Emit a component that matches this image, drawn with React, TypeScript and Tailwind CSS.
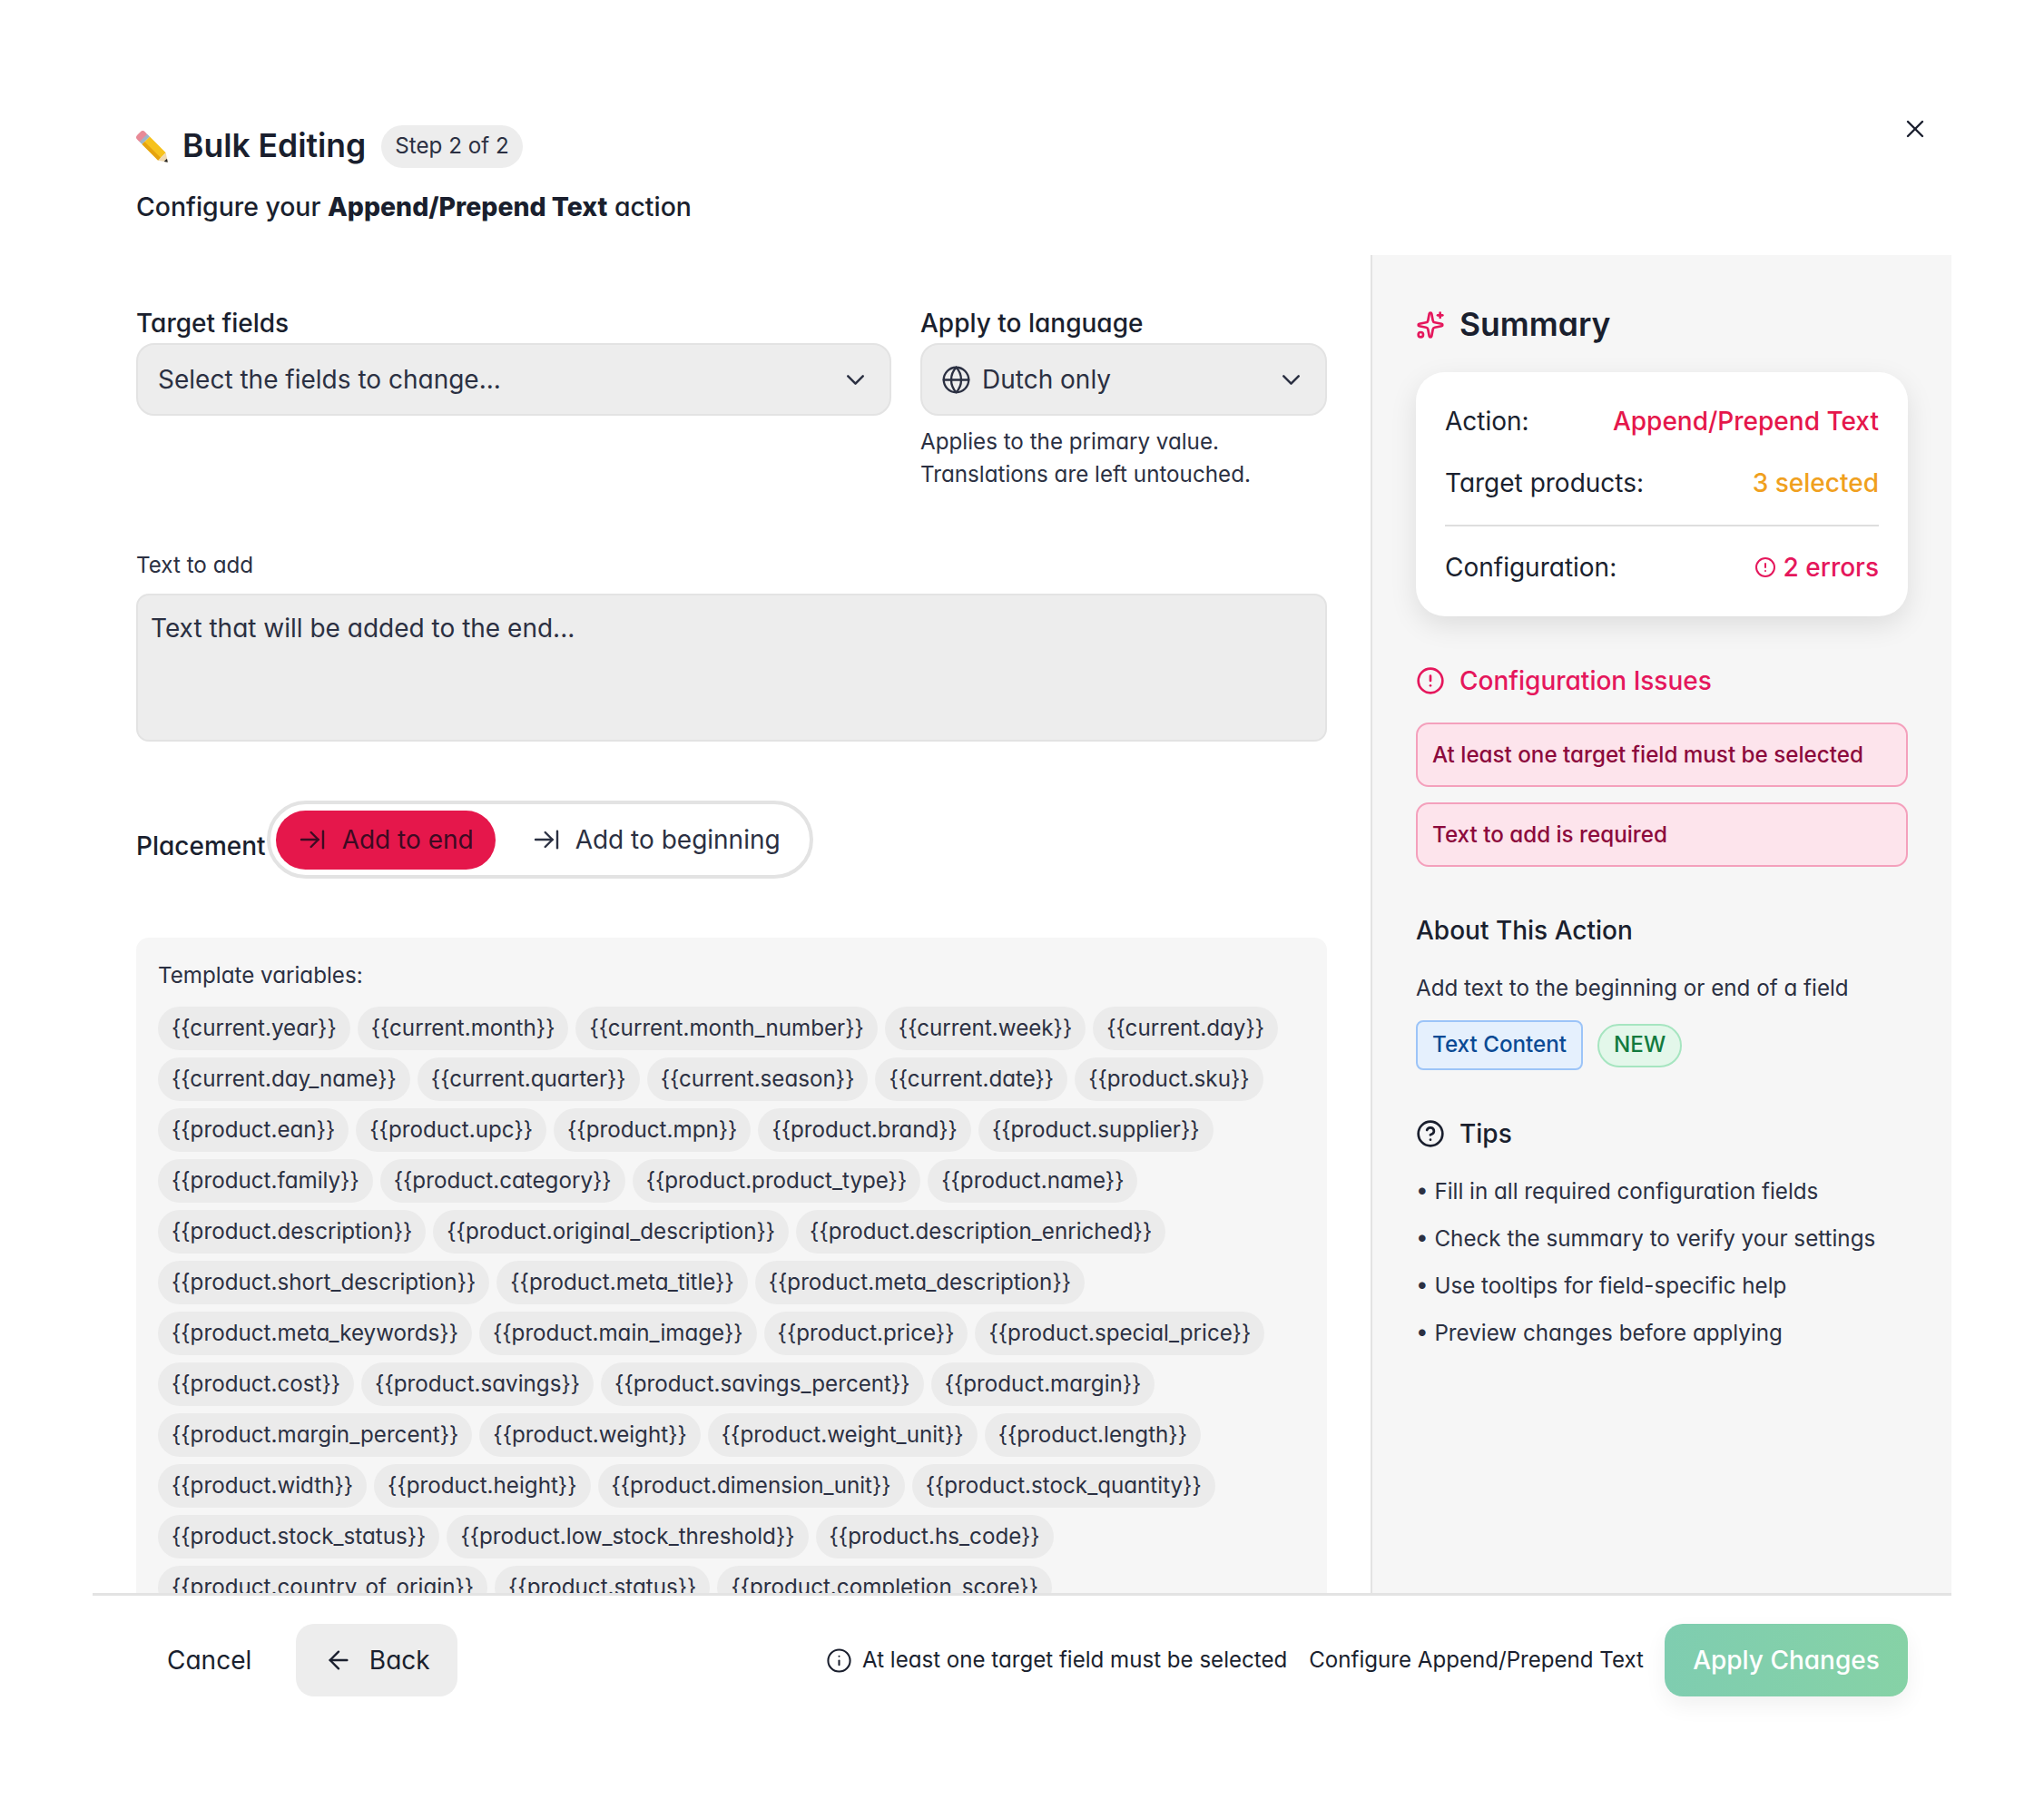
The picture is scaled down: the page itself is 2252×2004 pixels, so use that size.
import { ArrowLeft, ArrowRightToLine, ChevronDown, CircleAlert, CircleHelp, Globe, Info, Sparkles, X } from 'lucide-react'

const variables = [
  'current.year', 'current.month', 'current.month_number', 'current.week', 'current.day',
  'current.day_name', 'current.quarter', 'current.season', 'current.date', 'product.sku',
  'product.ean', 'product.upc', 'product.mpn', 'product.brand', 'product.supplier',
  'product.family', 'product.category', 'product.product_type', 'product.name',
  'product.description', 'product.original_description', 'product.description_enriched',
  'product.short_description', 'product.meta_title', 'product.meta_description',
  'product.meta_keywords', 'product.main_image', 'product.price', 'product.special_price',
  'product.cost', 'product.savings', 'product.savings_percent', 'product.margin',
  'product.margin_percent', 'product.weight', 'product.weight_unit', 'product.length',
  'product.width', 'product.height', 'product.dimension_unit', 'product.stock_quantity',
  'product.stock_status', 'product.low_stock_threshold', 'product.hs_code',
  'product.country_of_origin', 'product.status', 'product.completion_score',
]

const tips = [
  'Fill in all required configuration fields',
  'Check the summary to verify your settings',
  'Use tooltips for field-specific help',
  'Preview changes before applying',
]

function PencilEmoji() {
  return (
    <svg viewBox="0 0 37 36" className="w-[37px] h-[36px] shrink-0">
      <g transform="translate(3 3) rotate(45)">
        <rect x="0" y="-6" width="9" height="12" rx="3.5" fill="#e88a97" />
        <rect x="7" y="-6" width="4" height="12" fill="#9db4c8" />
        <rect x="11" y="-6" width="25" height="12" fill="#f6c21c" />
        <rect x="11" y="2" width="25" height="4" fill="#e5a30f" />
        <polygon points="36,-6 45,0 36,6" fill="#f0d9b0" />
        <polygon points="41.5,-2.3 45,0 41.5,2.3" fill="#222222" />
      </g>
    </svg>
  )
}

function SummaryRow({ label, children }: { label: string; children: React.ReactNode }) {
  return (
    <div className="flex items-center justify-between">
      <span>{label}</span>
      {children}
    </div>
  )
}

export default function App() {
  return (
    <div className="w-[2252px] h-[2004px] bg-white overflow-hidden text-[#1a1f2e] text-[24.2px] font-['Inter',sans-serif] [font-feature-settings:'cv11']">
      <div className="relative mx-[102px] pt-[138px]">
        <button className="absolute right-[24px] top-[126px] text-[#1a1f2e]">
          <X className="w-[32px] h-[32px]" strokeWidth={1.8} />
        </button>

        <header className="px-[48px] h-[143px]">
          <div className="flex items-center h-[47px]">
            <PencilEmoji />
            <h1 className="ml-[14px] -mt-[2px] text-[35.5px] font-semibold">Bulk Editing</h1>
            <span className="ml-[17px] h-[47px] px-[15px] flex items-center rounded-full bg-[#ededed] text-[24.2px] text-[#2b3042]">Step 2 of 2</span>
          </div>
          <p className="mt-[25px] text-[28.4px] font-medium leading-[36px]">
            Configure your <strong className="font-extrabold">Append/Prepend Text</strong> action
          </p>
        </header>

        <div className="flex h-[1474px] overflow-hidden">
          <main className="w-[1408px] px-[48px] pt-[57px] overflow-hidden">
            <div className="flex gap-[32px]">
              <div className="w-[832px]">
                <label className="block text-[28px] font-medium leading-[36px] mb-[4px]">Target fields</label>
                <div className="h-[80px] pl-[22px] pr-[21px] flex items-center justify-between rounded-[20px] bg-[#ededed] border-2 border-[#e3e3e3] text-[#2b3042] text-[28px]">
                  <span>Select the fields to change...</span>
                  <ChevronDown className="w-[33px] h-[33px]" strokeWidth={1.8} />
                </div>
              </div>
              <div className="w-[448px]">
                <label className="block text-[28px] font-medium leading-[36px] mb-[4px]">Apply to language</label>
                <div className="h-[80px] pl-[21px] pr-[21px] flex items-center rounded-[20px] bg-[#ededed] border-2 border-[#e3e3e3] text-[#2b3042] text-[28px]">
                  <Globe className="w-[33px] h-[33px]" strokeWidth={1.7} />
                  <span className="ml-[12px]">Dutch only</span>
                  <ChevronDown className="ml-auto w-[33px] h-[33px]" strokeWidth={1.8} />
                </div>
                <p className="mt-[11px] text-[24.2px] leading-[36px] text-[#2b3042]">Applies to the primary value.<br />Translations are left untouched.</p>
              </div>
            </div>

            <label className="block mt-[64px] text-[24.2px] leading-[36px] text-[#2b3042]">Text to add</label>
            <div className="mt-[13px] h-[163px] px-[14px] py-[18px] rounded-[14px] bg-[#ededed] border-2 border-[#e3e3e3] text-[#2b3042] text-[28px] leading-[36px]">
              Text that will be added to the end...
            </div>

            <div className="mt-[65px] flex items-center">
              <span className="mt-[14px] text-[28px] font-medium">Placement</span>
              <div className="ml-[1px] h-[86px] px-[6px] flex items-center rounded-full bg-white border-[4px] border-[#e3e3e3] text-[28px]">
                <div className="h-[65px] w-[242px] pl-[24px] flex items-center gap-[17px] rounded-full bg-[#e5174b] text-[#3c0a22]">
                  <ArrowRightToLine className="w-[32px] h-[32px]" strokeWidth={1.8} />
                  <span>Add to end</span>
                </div>
                <div className="h-[65px] pl-[40px] pr-[26px] flex items-center gap-[16px] text-[#2b3042]">
                  <ArrowRightToLine className="w-[32px] h-[32px]" strokeWidth={1.8} />
                  <span>Add to beginning</span>
                </div>
              </div>
            </div>

            <section className="mt-[65px] rounded-t-[14px] bg-[#f6f6f6] px-[24px] pt-[26px] pb-[24px]">
              <p className="text-[24.2px] leading-[32px] text-[#2b3042]">Template variables:</p>
              <div className="mt-[18px] flex flex-wrap gap-x-[8px] gap-y-[8px]">
                {variables.map((v) => (
                  <span key={v} className="h-[48px] px-[15px] flex items-center rounded-full bg-[#ebebeb] text-[24.2px] text-[#2b3042]">{`{{${v}}}`}</span>
                ))}
              </div>
            </section>
          </main>

          <aside className="w-[640px] border-l-2 border-[#e3e3e3] bg-[#f6f6f6] px-[48px] pt-[55px]">
            <div className="flex items-center h-[44px]">
              <Sparkles className="w-[32px] h-[32px] text-[#e5175c]" />
              <h2 className="ml-[16px] text-[35.5px] font-semibold">Summary</h2>
            </div>
            <div className="mt-[30px] h-[269px] px-[32px] pt-[33px] rounded-[32px] bg-white shadow-[0_10px_30px_rgba(0,0,0,0.1)] text-[28px]">
              <SummaryRow label="Action:"><span className="font-medium text-[#e5174b]">Append/Prepend Text</span></SummaryRow>
              <div className="mt-[26px]">
                <SummaryRow label="Target products:"><span className="font-medium text-[#f0a01e]">3 selected</span></SummaryRow>
              </div>
              <div className="mt-[25px] border-t-2 border-[#dedede]" />
              <div className="mt-[24px]">
                <SummaryRow label="Configuration:">
                  <span className="flex items-center gap-[8px] font-medium text-[#e5175c]"><CircleAlert className="w-[24px] h-[24px]" />2 errors</span>
                </SummaryRow>
              </div>
            </div>

            <div className="mt-[53px] flex items-center h-[36px] text-[#e5175c]">
              <CircleAlert className="w-[32px] h-[32px]" />
              <span className="ml-[16px] text-[28px] font-medium">Configuration Issues</span>
            </div>
            <div className="mt-[28px] flex flex-col gap-[17px]">
              <div className="h-[71px] px-[16px] pt-[2px] flex items-center rounded-[14px] bg-[#fde4ec] border-2 border-[#f4a0bc] text-[#8c0a3c] text-[24.2px] font-medium">At least one target field must be selected</div>
              <div className="h-[71px] px-[16px] pt-[2px] flex items-center rounded-[14px] bg-[#fde4ec] border-2 border-[#f4a0bc] text-[#8c0a3c] text-[24.2px] font-medium">Text to add is required</div>
            </div>

            <h3 className="mt-[52px] text-[28px] font-medium leading-[36px]">About This Action</h3>
            <p className="mt-[28px] text-[24.2px] leading-[36px] text-[#2b3042]">Add text to the beginning or end of a field</p>
            <div className="mt-[17px] flex items-center gap-[16px]">
              <span className="h-[55px] px-[16px] flex items-center rounded-[8px] bg-[#e5f0fd] border-2 border-[#9cc4f8] text-[#0a4a94] text-[24.2px] font-medium">Text Content</span>
              <span className="h-[48px] px-[16px] flex items-center rounded-full bg-[#e3f7ea] border-2 border-[#a6e5c0] text-[#127a3e] text-[24.2px] font-medium">NEW</span>
            </div>

            <div className="mt-[52px] flex items-center h-[36px]">
              <CircleHelp className="w-[32px] h-[32px]" />
              <span className="ml-[16px] text-[28px] font-medium">Tips</span>
            </div>
            <ul className="mt-[28px] flex flex-col gap-[16px] text-[24.2px] leading-[36px] text-[#2b3042]">
              {tips.map((t) => (
                <li key={t}>• {t}</li>
              ))}
            </ul>
          </aside>
        </div>

        <footer className="h-[114px] border-t-[3px] border-[#e3e3e3] pl-[82px] pr-[48px] pt-[30px] flex items-center text-[28px]">
          <span>Cancel</span>
          <div className="ml-[49px] h-[80px] w-[178px] flex items-center justify-center gap-[18px] rounded-[20px] bg-[#ededed]">
            <ArrowLeft className="w-[32px] h-[32px]" strokeWidth={1.8} />
            <span>Back</span>
          </div>
          <div className="ml-auto mt-[2px] flex items-center text-[24.1px]">
            <Info className="w-[29px] h-[29px]" strokeWidth={1.7} />
            <span className="ml-[11px]">At least one target field must be selected</span>
            <span className="ml-[24px]">Configure Append/Prepend Text</span>
          </div>
          <div className="ml-[23px] h-[80px] w-[268px] flex items-center justify-center rounded-[20px] bg-gradient-to-r from-[#7fcdb0] to-[#86d2a6] text-white font-medium shadow-[0_10px_24px_rgba(0,0,0,0.06)]">Apply Changes</div>
        </footer>
      </div>
    </div>
  )
}
